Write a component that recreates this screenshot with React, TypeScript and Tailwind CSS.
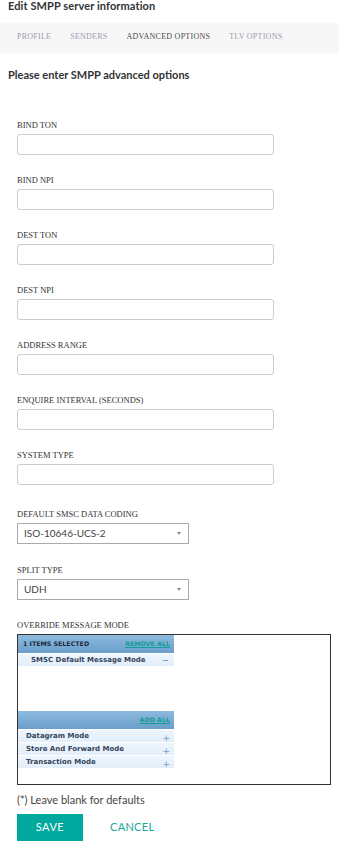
const textFields = [
  'BIND TON',
  'BIND NPI',
  'DEST TON',
  'DEST NPI',
  'ADDRESS RANGE',
  'ENQUIRE INTERVAL (SECONDS)',
  'SYSTEM TYPE',
]

const tabs = ['PROFILE', 'SENDERS', 'ADVANCED OPTIONS', 'TLV OPTIONS']

const available = ['Datagram Mode', 'Store And Forward Mode', 'Transaction Mode']

function Label({ children }: { children: React.ReactNode }) {
  return (
    <label className="block h-[10px] mb-[4px] font-['Liberation_Serif',serif] text-[8.5px] leading-[10px] text-[#333]">
      {children}
    </label>
  )
}

function FakeSelect({ value }: { value: string }) {
  return (
    <div className="w-[172px] h-[21px] border border-[#aaa] bg-white flex items-center justify-between pl-[6px] pr-[7px]">
      <span className="text-[10px] text-[#444] font-['Lato',sans-serif]">{value}</span>
      <svg width="4" height="3" viewBox="0 0 4 3">
        <path d="M0 0h4L2 3z" fill="#888" />
      </svg>
    </div>
  )
}

function ListHeader({ left, right }: { left?: string; right: string }) {
  return (
    <div className="h-[18px] flex items-center justify-between pl-[5px] pr-[4px] bg-gradient-to-b from-[#8dbade] to-[#6a9ecb] font-['DejaVu_Sans',sans-serif] font-bold text-[6.3px]">
      <span className="text-[#1d2b3b]">{left}</span>
      <span className="text-[#129e93] underline">{right}</span>
    </div>
  )
}

export default function App() {
  return (
    <div className="w-[339px] min-h-[851px] bg-white font-['Lato',sans-serif] text-[#333]">
      <h1 className="h-[23px] pl-[8px] text-[11px] font-bold leading-[11px] tracking-[0.1px]">Edit SMPP server information</h1>

      <div className="h-[30px] bg-[#f7f7f7] flex items-center gap-[19px] pl-[17px] pb-[2px] font-['Liberation_Serif',serif] text-[8px] tracking-[0.25px]">
        {tabs.map((t) => (
          <span key={t} className={t === 'ADVANCED OPTIONS' ? 'text-[#4a4a4a]' : 'text-[#9c9cae]'}>
            {t}
          </span>
        ))}
      </div>

      <h2 className="mt-[17px] pl-[8px] text-[11px] font-bold leading-[10px]">Please enter SMPP advanced options</h2>

      <form className="mt-[40px] pl-[17px] flex flex-col">
        {textFields.map((f) => (
          <div key={f} className="mb-[20px]">
            <Label>{f}</Label>
            <input
              type="text"
              className="block w-[257px] h-[21px] border border-[#ccc] rounded-[3px] bg-white focus:outline-none"
            />
          </div>
        ))}

        <div className="mt-[4px] mb-[21px]">
          <Label>DEFAULT SMSC DATA CODING</Label>
          <FakeSelect value="ISO-10646-UCS-2" />
        </div>

        <div className="mb-[20px]">
          <Label>SPLIT TYPE</Label>
          <FakeSelect value="UDH" />
        </div>

        <div>
          <Label>OVERRIDE MESSAGE MODE</Label>
          <div className="w-[314px] h-[151px] border border-[#333] flex flex-col">
            <div className="w-[156px] h-[76px] flex flex-col">
              <ListHeader left="1 ITEMS SELECTED" right="REMOVE ALL" />
              <div className="mt-[1px] h-[12px] flex items-center justify-between pl-[13px] pr-[6px] bg-gradient-to-b from-[#eef5fc] to-[#e2eefa] font-['DejaVu_Sans',sans-serif] font-bold text-[7px] text-[#34445a]">
                <span>SMSC Default Message Mode</span>
                <span className="w-[5px] h-[1px] bg-[#7a9cc4]" />
              </div>
            </div>
            <div className="w-[156px] flex flex-col">
              <ListHeader right="ADD ALL" />
              {available.map((a) => (
                <div
                  key={a}
                  className="mt-[1px] h-[12px] flex items-center justify-between pl-[8px] pr-[4px] bg-gradient-to-b from-[#eef5fc] to-[#e2eefa] font-['DejaVu_Sans',sans-serif] font-bold text-[7px] text-[#34445a]"
                >
                  <span>{a}</span>
                  <span className="text-[9px] leading-[9px] font-normal text-[#7a9cc4] mt-[4px]">+</span>
                </div>
              ))}
            </div>
          </div>
        </div>

        <p className="mt-[8px] text-[11px] leading-[13px] text-[#444]">(*) Leave blank for defaults</p>

        <div className="mt-[8px] flex items-center">
          <button type="button" className="w-[66px] h-[27px] bg-[#00a99d] text-white text-[11px] tracking-[0.5px]">
            SAVE
          </button>
          <button type="button" className="ml-[27px] text-[#1aa89a] text-[11px] tracking-[0.3px]">
            CANCEL
          </button>
        </div>
      </form>
    </div>
  )
}
